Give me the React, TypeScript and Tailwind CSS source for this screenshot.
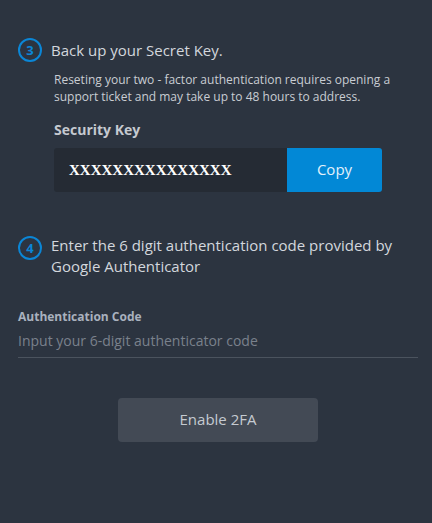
import { FC } from 'react'

const StepBadge: FC<{ n: number }> = ({ n }) => (
  <div className="flex h-[24px] w-[24px] shrink-0 items-center justify-center rounded-full border-2 border-[#0b86d6] text-[13px] font-bold leading-none text-[#0b86d6]">
    {n}
  </div>
)

const App: FC = () => {
  return (
    <div
      className="h-[523px] w-[432px] bg-[#2c3440] px-[18px] pt-[38px]"
      style={{ fontFamily: '"Open Sans", "Noto Sans", sans-serif' }}
    >
      <div className="flex items-center gap-[9px]">
        <StepBadge n={3} />
        <h2 className="text-[15px] leading-[24px] text-[#d3d7dd]">Back up your Secret Key.</h2>
      </div>
      <p className="ml-[36px] mt-[9px] text-[12px] leading-[17px] text-[#c9cdd3]">
        Reseting your two - factor authentication requires opening a support ticket and may take up to 48 hours to address.
      </p>

      <div className="ml-[36px] mt-[15px]">
        <div className="text-[14px] font-bold leading-[20px] text-[#c5c9d0]">Security Key</div>
        <div className="mt-[8px] flex h-[44px] w-[328px]">
          <div
            className="flex flex-1 items-center rounded-l-[3px] bg-[#252b34] pl-[15px] text-[15px] font-bold text-white"
            style={{ fontFamily: '"Liberation Serif", serif' }}
          >
            XXXXXXXXXXXXXXX
          </div>
          <button className="w-[95px] rounded-r-[3px] bg-[#0288d6] pb-[2px] text-[15px] text-[#e3f1fb]">Copy</button>
        </div>
      </div>

      <div className="mt-[43px] flex items-start gap-[9px]">
        <div className="pt-[1px]">
          <StepBadge n={4} />
        </div>
        <h2 className="text-[15px] leading-[21px] text-[#d3d7dd]">
          Enter the 6 digit authentication code provided by Google Authenticator
        </h2>
      </div>

      <div className="mt-[32px]">
        <label className="block text-[12px] font-bold leading-[16px] text-[#a9b1be]">Authentication Code</label>
        <input
          className="mt-[6px] w-[400px] border-b border-[#4b535e] bg-transparent pb-[6px] text-[14px] leading-[20px] text-[#d3d7dd] outline-none placeholder:text-[#7a818c]"
          placeholder="Input your 6-digit authenticator code"
        />
      </div>

      <div className="mt-[40px] flex pl-[100px]">
        <button className="h-[44px] w-[200px] rounded-[4px] bg-[#434a55] pb-[2px] text-[15px] text-[#c5cad1]">Enable 2FA</button>
      </div>
    </div>
  )
}

export default App
